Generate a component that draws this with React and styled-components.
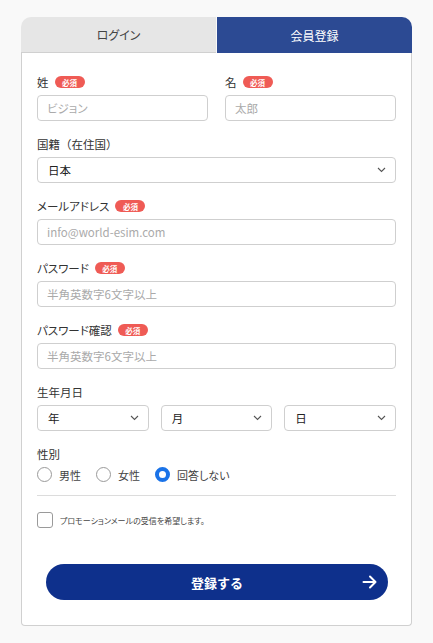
import React from 'react';
import styled, { createGlobalStyle } from 'styled-components';

const GlobalStyle = createGlobalStyle`
  body {
    margin: 0;
    background: #f9f9f9;
    font-family: 'Noto Sans CJK JP', 'Noto Sans', sans-serif;
    font-feature-settings: 'palt';
    color: #333;
  }
`;

const Page = styled.div`
  padding: 17px 21px 17px 21px;
  width: 391px;
`;

const Tabs = styled.div`
  display: flex;
  height: 36px;
`;

const Tab = styled.div`
  flex: 1;
  display: flex;
  align-items: center;
  justify-content: center;
  font-size: 12px;
  color: ${(p) => (p.active ? '#fff' : '#444')};
  background: ${(p) => (p.active ? '#2c4a93' : '#e6e6e6')};
  border-radius: ${(p) => (p.active ? '0 10px 0 0' : '10px 0 0 0')};
  margin-left: ${(p) => (p.active ? '1px' : '0')};
  border-bottom: ${(p) => (p.active ? 'none' : '1px solid #d0d0d0')};
`;

const Card = styled.div`
  background: #fff;
  border: 1px solid #d0d0d0;
  border-top: none;
  border-radius: 0 0 4px 4px;
  padding: 22px 15px 25px 15px;
  display: flex;
  flex-direction: column;
  gap: 16px;
`;

const Row = styled.div`
  display: grid;
  grid-template-columns: ${(p) => p.cols || '1fr'};
  gap: ${(p) => p.gap || '17px'};
`;

const Field = styled.div`
  display: flex;
  flex-direction: column;
  gap: 6px;
`;

const LabelRow = styled.div`
  display: flex;
  align-items: center;
  height: 14px;
  font-size: 11.5px;
  color: #333;
  gap: 6px;
  font-feature-settings: ${(p) => (p.plain ? 'normal' : "'palt'")};
`;

const Badge = styled.span`
  display: inline-flex;
  align-items: center;
  justify-content: center;
  background: #ef5b55;
  color: #fff;
  font-size: 7.5px;
  font-weight: 700;
  width: 30px;
  height: 12px;
  border-radius: 6px;
`;

const Input = styled.input`
  box-sizing: border-box;
  height: 26px;
  width: 100%;
  border: 1px solid #cfcfcf;
  border-radius: 4px;
  padding: 0 9px;
  font-family: inherit;
  font-feature-settings: 'palt';
  font-size: 11.5px;
  color: #222;
  background: #fff;
  outline: none;
  &::placeholder {
    color: #aaa;
  }
`;

const SelectBox = styled.div`
  box-sizing: border-box;
  height: 26px;
  border: 1px solid #cfcfcf;
  border-radius: 4px;
  padding: 0 9px 0 10px;
  display: flex;
  align-items: center;
  justify-content: space-between;
  font-size: 11.5px;
  color: #222;
  background: #fff;
`;

const Chevron = () => (
  <svg width="9" height="6" viewBox="0 0 9 6">
    <path d="M1 1l3.5 3.5L8 1" fill="none" stroke="#555" strokeWidth="1.1" />
  </svg>
);

const Select = ({ value }) => (
  <SelectBox>
    <span>{value}</span>
    <Chevron />
  </SelectBox>
);

const RadioGroup = styled.div`
  display: flex;
  align-items: center;
  gap: 15px;
  height: 15px;
`;

const RadioItem = styled.label`
  display: flex;
  align-items: center;
  gap: 7px;
  font-size: 11px;
  color: #444;
`;

const RadioDot = styled.span`
  box-sizing: border-box;
  width: 15px;
  height: 15px;
  border-radius: 50%;
  background: #fff;
  border: ${(p) => (p.checked ? '4px solid #1a73e8' : '1px solid #9a9a9a')};
`;

const Divider = styled.hr`
  border: none;
  border-top: 1px solid #dcdcdc;
  margin: -3px 0 0 0;
`;

const CheckRow = styled.label`
  display: flex;
  align-items: center;
  gap: 7px;
  font-size: 8px;
  color: #444;
`;

const CheckBox = styled.span`
  box-sizing: border-box;
  width: 16px;
  height: 16px;
  border: 1px solid #9a9a9a;
  border-radius: 3px;
  background: #fff;
`;

const Submit = styled.button`
  position: relative;
  margin: 20px 8px 0 9px;
  height: 36px;
  border: none;
  border-radius: 18px;
  background: #0e308c;
  color: #fff;
  font-family: inherit;
  font-size: 13px;
  font-weight: 700;
  display: flex;
  align-items: center;
  justify-content: center;
`;

const Arrow = styled.svg`
  position: absolute;
  right: 10px;
  top: 10px;
`;

const Required = () => <Badge>必須</Badge>;

export default function App() {
  return (
    <Page>
      <GlobalStyle />
      <Tabs>
        <Tab>ログイン</Tab>
        <Tab active>会員登録</Tab>
      </Tabs>
      <Card>
        <Row cols="1fr 1fr">
          <Field>
            <LabelRow>姓<Required /></LabelRow>
            <Input placeholder="ビジョン" />
          </Field>
          <Field>
            <LabelRow>名<Required /></LabelRow>
            <Input placeholder="太郎" />
          </Field>
        </Row>
        <Field>
          <LabelRow plain>国籍（在住国）</LabelRow>
          <Select value="日本" />
        </Field>
        <Field>
          <LabelRow>メールアドレス<Required /></LabelRow>
          <Input placeholder="info@world-esim.com" />
        </Field>
        <Field>
          <LabelRow>パスワード<Required /></LabelRow>
          <Input placeholder="半角英数字6文字以上" />
        </Field>
        <Field>
          <LabelRow>パスワード確認<Required /></LabelRow>
          <Input placeholder="半角英数字6文字以上" />
        </Field>
        <Field>
          <LabelRow>生年月日</LabelRow>
          <Row cols="1fr 1fr 1fr" gap="12px">
            <Select value="年" />
            <Select value="月" />
            <Select value="日" />
          </Row>
        </Field>
        <Field>
          <LabelRow>性別</LabelRow>
          <RadioGroup>
            <RadioItem><RadioDot />男性</RadioItem>
            <RadioItem><RadioDot />女性</RadioItem>
            <RadioItem><RadioDot checked />回答しない</RadioItem>
          </RadioGroup>
        </Field>
        <Divider />
        <CheckRow>
          <CheckBox />
          プロモーションメールの受信を希望します。
        </CheckRow>
        <Submit>
          登録する
          <Arrow width="16" height="16" viewBox="0 0 16 16">
            <path d="M1.5 8h12M8 2.5L13.5 8 8 13.5" fill="none" stroke="#fff" strokeWidth="2" strokeLinecap="round" strokeLinejoin="round" />
          </Arrow>
        </Submit>
      </Card>
    </Page>
  );
}
